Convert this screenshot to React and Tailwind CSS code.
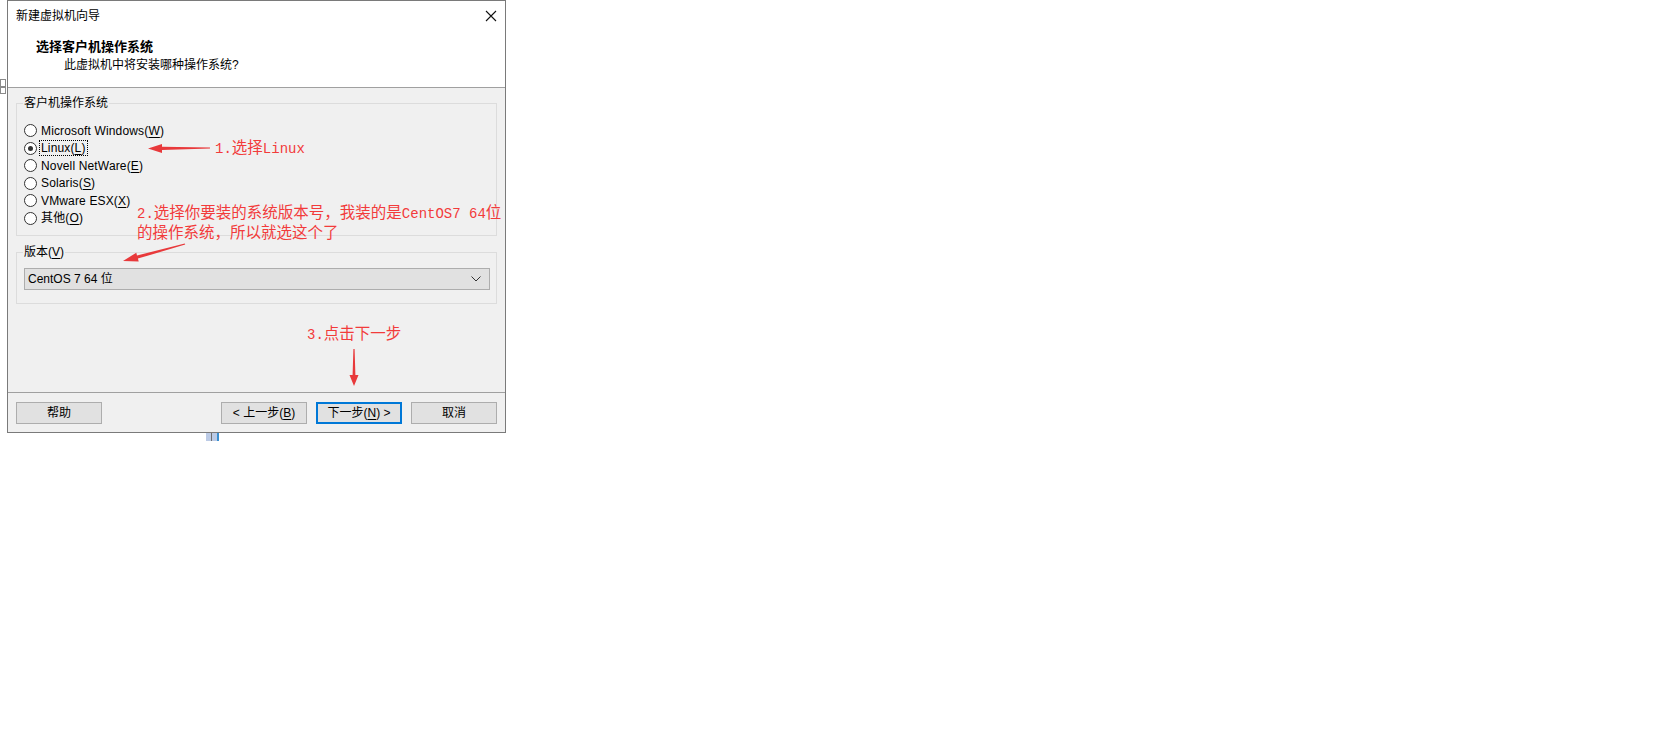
import React from "react";

function arrowPoints(x1, y1, x2, y2, headLen, headHalf, tailHalf, neckHalf) {
  const dx = x2 - x1;
  const dy = y2 - y1;
  const len = Math.hypot(dx, dy);
  const ux = dx / len;
  const uy = dy / len;
  const nx = -uy;
  const ny = ux;
  const bx = x2 - ux * headLen;
  const by = y2 - uy * headLen;
  const pts = [
    [x1 + nx * tailHalf, y1 + ny * tailHalf],
    [bx + nx * neckHalf, by + ny * neckHalf],
    [bx + nx * headHalf, by + ny * headHalf],
    [x2, y2],
    [bx - nx * headHalf, by - ny * headHalf],
    [bx - nx * neckHalf, by - ny * neckHalf],
    [x1 - nx * tailHalf, y1 - ny * tailHalf],
  ];
  return pts.map((p) => p[0].toFixed(1) + "," + p[1].toFixed(1)).join(" ");
}

function Radio({ checked, children, focused }) {
  return (
    <div className="flex items-center h-[17.5px]">
      <span className="w-[13px] h-[13px] rounded-full border border-[#333333] bg-white flex items-center justify-center shrink-0">
        {checked && <span className="w-[5px] h-[5px] rounded-full bg-[#333333]" />}
      </span>
      <span
        className={
          "ml-[3px] leading-[14px] px-[1px] tracking-[0.15px] " +
          (focused ? "outline outline-1 outline-dotted outline-[#000000]" : "")
        }
      >
        {children}
      </span>
    </div>
  );
}

function Btn({ children, primary }) {
  return (
    <div
      className={
        "w-[86px] h-[22px] flex items-center justify-center bg-[#e1e1e1] " +
        (primary ? "border-2 border-[#0078d7]" : "border border-[#adadad]")
      }
    >
      {children}
    </div>
  );
}

const U = ({ children }) => <span className="underline underline-offset-2">{children}</span>;
const M = ({ children }) => (
  <span className="font-['Liberation_Mono',monospace] text-[14px] leading-[14px]">{children}</span>
);

export default function App() {
  return (
    <div className="relative w-[1655px] h-[736px] bg-white overflow-hidden font-['Liberation_Sans','Noto_Sans_CJK_SC',sans-serif] text-[12px] text-black">
      {/* dialog */}
      <div className="ml-[7px] w-[499px] h-[433px] border border-[#7a7a7a] flex flex-col">
        {/* header */}
        <div className="h-[87px] bg-white border-b border-[#a0a0a0] pl-[8px] pt-[7px]">
          <div className="flex items-center justify-between h-[16px] leading-[16px]">
            <span>新建虚拟机向导</span>
            <svg width="12" height="12" viewBox="0 0 12 12" className="mr-[8px]">
              <path d="M1 1 L11 11 M11 1 L1 11" stroke="#111" strokeWidth="1.1" fill="none" />
            </svg>
          </div>
          <div className="mt-[15px] pl-[20px] h-[16px] leading-[16px] font-bold text-[13px]">
            选择客户机操作系统
          </div>
          <div className="mt-[2px] pl-[48px] h-[16px] leading-[16px]">此虚拟机中将安装哪种操作系统?</div>
        </div>

        {/* body */}
        <div className="flex-1 bg-[#f0f0f0] px-[8px] pt-[15px]">
          <div className="relative h-[133px] border border-[#dcdcdc] pl-[7px] pt-[18px]">
            <span className="absolute left-[6px] top-[-9px] bg-[#f0f0f0] px-[1px] leading-[16px]">
              客户机操作系统
            </span>
            <Radio>
              Microsoft Windows(<U>W</U>)
            </Radio>
            <Radio checked focused>
              Linux(<U>L</U>)
            </Radio>
            <Radio>
              Novell NetWare(<U>E</U>)
            </Radio>
            <Radio>
              Solaris(<U>S</U>)
            </Radio>
            <Radio>
              VMware ESX(<U>X</U>)
            </Radio>
            <Radio>
              其他(<U>O</U>)
            </Radio>
          </div>

          <div className="relative mt-[16px] h-[52px] border border-[#dcdcdc] pl-[7px] pr-[6px] pt-[15px]">
            <span className="absolute left-[6px] top-[-9px] bg-[#f0f0f0] px-[1px] leading-[16px]">
              版本(<U>V</U>)
            </span>
            <div className="h-[22px] bg-[#e1e1e1] border border-[#adadad] flex items-center justify-between pl-[3px] pr-[8px]">
              <span>CentOS 7 64 位</span>
              <svg width="10" height="6" viewBox="0 0 10 6">
                <path d="M0.5 0.5 L5 5 L9.5 0.5" stroke="#333" strokeWidth="1" fill="none" />
              </svg>
            </div>
          </div>
        </div>

        {/* footer */}
        <div className="h-[40px] bg-[#f0f0f0] border-t border-[#a0a0a0] px-[8px] pt-[9px] flex justify-between">
          <Btn>帮助</Btn>
          <div className="flex gap-[9px]">
            <Btn>
              &lt; 上一步(<U>B</U>)
            </Btn>
            <Btn primary>
              下一步(<U>N</U>) &gt;
            </Btn>
            <Btn>取消</Btn>
          </div>
        </div>
      </div>

      {/* stray background fragments */}
      <svg className="absolute left-0 top-[78px]" width="7" height="18" viewBox="0 0 7 18">
        <rect x="0.5" y="1.5" width="5" height="7" fill="none" stroke="#8a8a8a" strokeWidth="1" />
        <rect x="0.5" y="9.5" width="5" height="6" fill="none" stroke="#8a8a8a" strokeWidth="1" />
      </svg>
      <div className="absolute left-[206px] top-[433px] w-[13px] h-[8px] flex">
        <div className="w-[5px] h-full bg-[#bccbe6]" />
        <div className="w-[1px] h-full bg-[#6f6f6f]" />
        <div className="w-[5px] h-full bg-[#bccbe6]" />
        <div className="w-[2px] h-full bg-[#3a8fd0]" />
      </div>

      {/* annotations */}
      <div className="absolute left-[215px] top-[135px] h-[22px] leading-[22px] text-[15.5px] text-[#f23b3b] font-['Noto_Sans_CJK_SC',sans-serif] whitespace-nowrap">
        <M>1.</M>选择<M>Linux</M>
      </div>
      <div className="absolute left-[137px] top-[201px] text-[15.5px] text-[#f23b3b] font-['Noto_Sans_CJK_SC',sans-serif] whitespace-nowrap">
        <div className="h-[20px] leading-[20px]">
          <M>2.</M>选择你要装的系统版本号，我装的是<M>CentOS7 64</M>位
        </div>
        <div className="h-[20px] leading-[20px]">的操作系统，所以就选这个了</div>
      </div>
      <div className="absolute left-[307px] top-[321px] h-[22px] leading-[22px] text-[15.5px] text-[#f23b3b] font-['Noto_Sans_CJK_SC',sans-serif] whitespace-nowrap">
        <M>3.</M>点击下一步
      </div>

      <svg className="absolute left-0 top-0 pointer-events-none" width="1655" height="736">
        <polygon points={arrowPoints(210, 148, 148, 148.5, 14, 4.5, 0.6, 1.6)} fill="#e8393b" />
        <polygon points={arrowPoints(185, 244, 123, 261, 15, 4.5, 0.6, 1.6)} fill="#e8393b" />
        <polygon points={arrowPoints(354, 349, 354, 386, 11, 4.5, 0.6, 1.4)} fill="#e8393b" />
      </svg>
    </div>
  );
}
